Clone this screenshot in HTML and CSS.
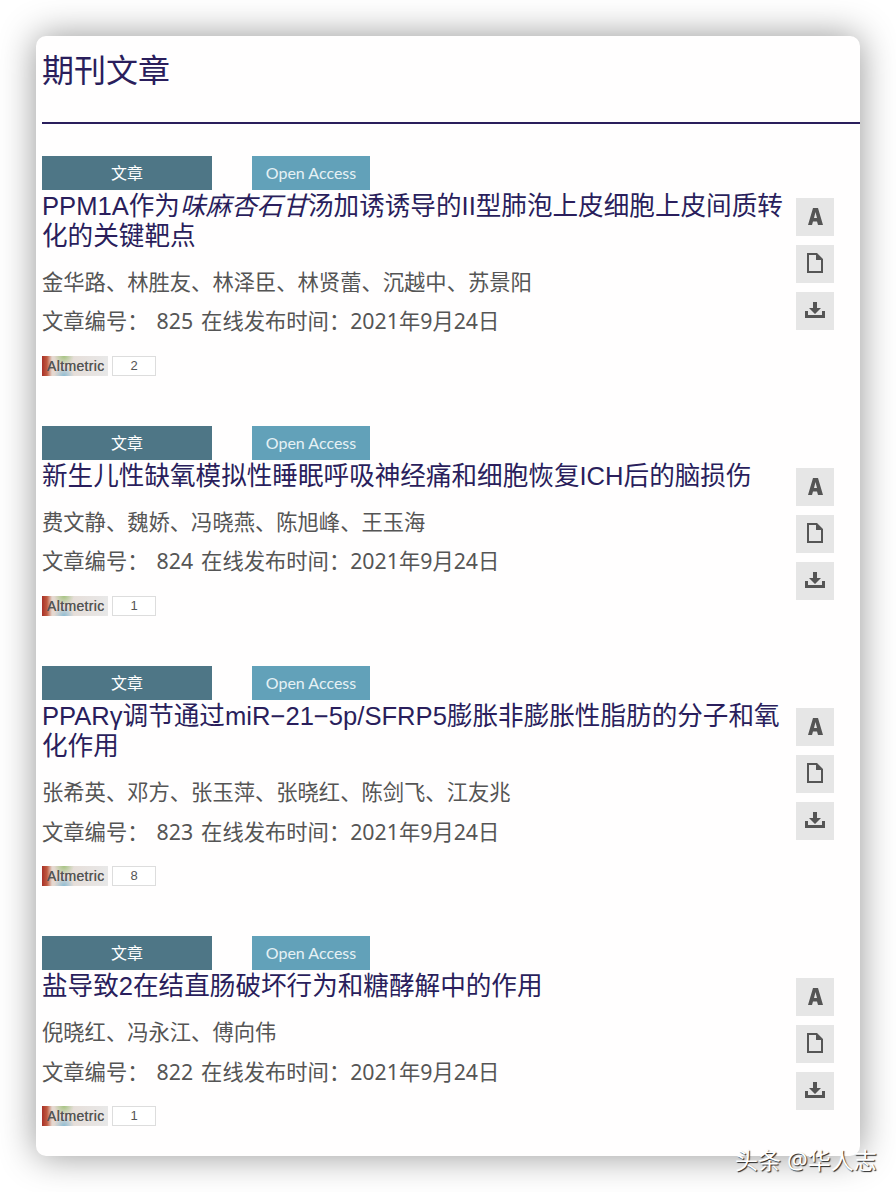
FILE: index.html
```html
<!DOCTYPE html>
<html lang="zh">
<head>
<meta charset="utf-8">
<title>期刊文章</title>
<link rel="stylesheet" href="styles.css">
</head>
<body>
<main class="card">
  <h1 class="heading">期刊文章</h1>
  <article class="item">
    <div class="tags"><span class="tag tag-type">文章</span><span class="tag tag-oa">Open Access</span></div>
    <div class="row">
      <div class="body">
        <h2 class="title">PPM1A作为<i>味麻杏石甘</i>汤加诱诱导的II型肺泡上皮细胞上皮间质转化的关键靶点</h2>
        <p class="authors">金华路、林胜友、林泽臣、林贤蕾、沉越中、苏景阳</p>
        <p class="meta">文章编号： 825 在线发布时间：2021年9月24日</p>
        <div class="alt"><span class="alt-logo">Altmetric</span><span class="alt-num">2</span></div>
      </div>
      <div class="tools">
        <span class="tool"><svg viewBox="0 0 38 38" class="ico"><path fill-rule="evenodd" d="M12 27 17 10h5l5 17h-5l-1-3.5h-4L16 27zM18 20h3l-1.500-6z"/></svg></span>
        <span class="tool"><svg viewBox="0 0 38 38" class="ico"><path fill-rule="evenodd" d="M11 8h10l6 6v14H11zM13 10v16h12V15h-5v-5z"/></svg></span>
        <span class="tool"><svg viewBox="0 0 38 38" class="ico"><path d="M17 10h4v6h4l-6 6-6-6h4zM9 19h3v4h14v-4h3v7H9z"/></svg></span>
      </div>
    </div>
  </article>
  <article class="item">
    <div class="tags"><span class="tag tag-type">文章</span><span class="tag tag-oa">Open Access</span></div>
    <div class="row">
      <div class="body">
        <h2 class="title">新生儿性缺氧模拟性睡眠呼吸神经痛和细胞恢复ICH后的脑损伤</h2>
        <p class="authors">费文静、魏娇、冯晓燕、陈旭峰、王玉海</p>
        <p class="meta">文章编号： 824 在线发布时间：2021年9月24日</p>
        <div class="alt"><span class="alt-logo">Altmetric</span><span class="alt-num">1</span></div>
      </div>
      <div class="tools">
        <span class="tool"><svg viewBox="0 0 38 38" class="ico"><path fill-rule="evenodd" d="M12 27 17 10h5l5 17h-5l-1-3.5h-4L16 27zM18 20h3l-1.500-6z"/></svg></span>
        <span class="tool"><svg viewBox="0 0 38 38" class="ico"><path fill-rule="evenodd" d="M11 8h10l6 6v14H11zM13 10v16h12V15h-5v-5z"/></svg></span>
        <span class="tool"><svg viewBox="0 0 38 38" class="ico"><path d="M17 10h4v6h4l-6 6-6-6h4zM9 19h3v4h14v-4h3v7H9z"/></svg></span>
      </div>
    </div>
  </article>
  <article class="item">
    <div class="tags"><span class="tag tag-type">文章</span><span class="tag tag-oa">Open Access</span></div>
    <div class="row">
      <div class="body">
        <h2 class="title">PPARγ调节通过miR−21−5p/SFRP5膨胀非膨胀性脂肪的分子和氧化作用</h2>
        <p class="authors">张希英、邓方、张玉萍、张晓红、陈剑飞、江友兆</p>
        <p class="meta">文章编号： 823 在线发布时间：2021年9月24日</p>
        <div class="alt"><span class="alt-logo">Altmetric</span><span class="alt-num">8</span></div>
      </div>
      <div class="tools">
        <span class="tool"><svg viewBox="0 0 38 38" class="ico"><path fill-rule="evenodd" d="M12 27 17 10h5l5 17h-5l-1-3.5h-4L16 27zM18 20h3l-1.500-6z"/></svg></span>
        <span class="tool"><svg viewBox="0 0 38 38" class="ico"><path fill-rule="evenodd" d="M11 8h10l6 6v14H11zM13 10v16h12V15h-5v-5z"/></svg></span>
        <span class="tool"><svg viewBox="0 0 38 38" class="ico"><path d="M17 10h4v6h4l-6 6-6-6h4zM9 19h3v4h14v-4h3v7H9z"/></svg></span>
      </div>
    </div>
  </article>
  <article class="item">
    <div class="tags"><span class="tag tag-type">文章</span><span class="tag tag-oa">Open Access</span></div>
    <div class="row">
      <div class="body">
        <h2 class="title">盐导致2在结直肠破坏行为和糖酵解中的作用</h2>
        <p class="authors">倪晓红、冯永江、傅向伟</p>
        <p class="meta">文章编号： 822 在线发布时间：2021年9月24日</p>
        <div class="alt"><span class="alt-logo">Altmetric</span><span class="alt-num">1</span></div>
      </div>
      <div class="tools">
        <span class="tool"><svg viewBox="0 0 38 38" class="ico"><path fill-rule="evenodd" d="M12 27 17 10h5l5 17h-5l-1-3.5h-4L16 27zM18 20h3l-1.500-6z"/></svg></span>
        <span class="tool"><svg viewBox="0 0 38 38" class="ico"><path fill-rule="evenodd" d="M11 8h10l6 6v14H11zM13 10v16h12V15h-5v-5z"/></svg></span>
        <span class="tool"><svg viewBox="0 0 38 38" class="ico"><path d="M17 10h4v6h4l-6 6-6-6h4zM9 19h3v4h14v-4h3v7H9z"/></svg></span>
      </div>
    </div>
  </article>
</main>
<div class="watermark">头条 @华人志</div>
</body>
</html>
```
FILE: styles.css
```css
html, body { margin: 0; padding: 0; }
body {
  width: 896px;
  height: 1192px;
  overflow: hidden;
  background: #fff;
  font-family: "Noto Sans", "Noto Sans CJK SC", sans-serif;
  padding-top: 36px;
  box-sizing: border-box;
  position: relative;
}
.card {
  width: 824px;
  height: 1120px;
  margin-left: 36px;
  background: #fffefe;
  border-radius: 10px;
  box-shadow: 0 0 36px rgba(0,0,0,.42);
  padding-left: 6px;
  box-sizing: border-box;
  overflow: hidden;
}
.heading {
  margin: 0 0 32px;
  height: 88px;
  padding-top: 13px;
  box-sizing: border-box;
  line-height: 42px;
  font-size: 32px;
  font-weight: 400;
  color: #2a1e5c;
  border-bottom: 2px solid #2a1e5c;
}
.item { height: 270px; }
.item:nth-of-type(2) { height: 240px; }
.item:nth-of-type(4) { height: 220px; }
.tags { display: flex; height: 34px; }
.tag {
  display: flex;
  align-items: center;
  justify-content: center;
  color: #fff;
  height: 34px;
  padding-bottom: 2px;
  box-sizing: border-box;
}
.tag-type { width: 170px; background: #4e7686; font-size: 16px; margin-right: 40px; }
.tag-oa { width: 118px; background: #62a1b9; color: #e6f1f5; font-family: "Lato", sans-serif; font-size: 16px; }
.row { display: flex; }
.body { width: 754px; padding-right: 8px; box-sizing: border-box; }
.title {
  margin: 0;
  padding-top: 1px;
  font-family: "Liberation Sans", "Noto Sans CJK SC", sans-serif;
  font-size: 25.6px;
  font-weight: 400;
  line-height: 30px;
  color: #2a1e5c;
}
.authors, .meta {
  margin: 0;
  color: #555;
  font-size: 21.3px;
  line-height: 28px;
}
.authors { margin-top: 17px; }
.meta { margin-top: 11px; word-spacing: 2.5px; }
.alt { display: flex; margin-top: 21px; height: 20px; font-size: 14px; }
.item:nth-of-type(n+3) .meta { margin-top: 12px; }
.item:nth-of-type(n+3) .alt { margin-top: 20px; }
.alt-logo {
  width: 66px;
  box-sizing: border-box;
  padding-left: 5px;
  line-height: 20px;
  color: #555;
  letter-spacing: .35px;
  background:
    radial-gradient(circle at 22px 0, rgba(150,190,110,.8) 0, rgba(150,190,110,0) 10px),
    radial-gradient(circle at 22px 20px, rgba(120,180,210,.8) 0, rgba(120,180,210,0) 10px),
    linear-gradient(90deg, #a83028 0, #c05a40 5px, #e5d8d0 10px, #e8e8e8 100%);
  font-family: "Liberation Sans", sans-serif;
  text-shadow: 0 0 .5px #555;
  overflow: hidden;
}
.alt-num {
  width: 44px;
  margin-left: 4px;
  box-sizing: border-box;
  border: 1px solid #ddd;
  text-align: center;
  line-height: 18px;
  color: #555;
  background: #fff;
  font-family: "Liberation Sans", sans-serif;
  font-size: 13px;
}
.tools { display: flex; flex-direction: column; gap: 9px; padding-top: 8px; }
.tool {
  width: 38px;
  height: 38px;
  background: #e6e6e6;
  display: block;
}
.ico { display: block; width: 38px; height: 38px; fill: #555; }
.watermark {
  position: absolute;
  left: 735px;
  top: 1147px;
  font-size: 23px;
  line-height: 26px;
  color: #fff;
  text-shadow: 1px 1px 1px #222;
}
```
